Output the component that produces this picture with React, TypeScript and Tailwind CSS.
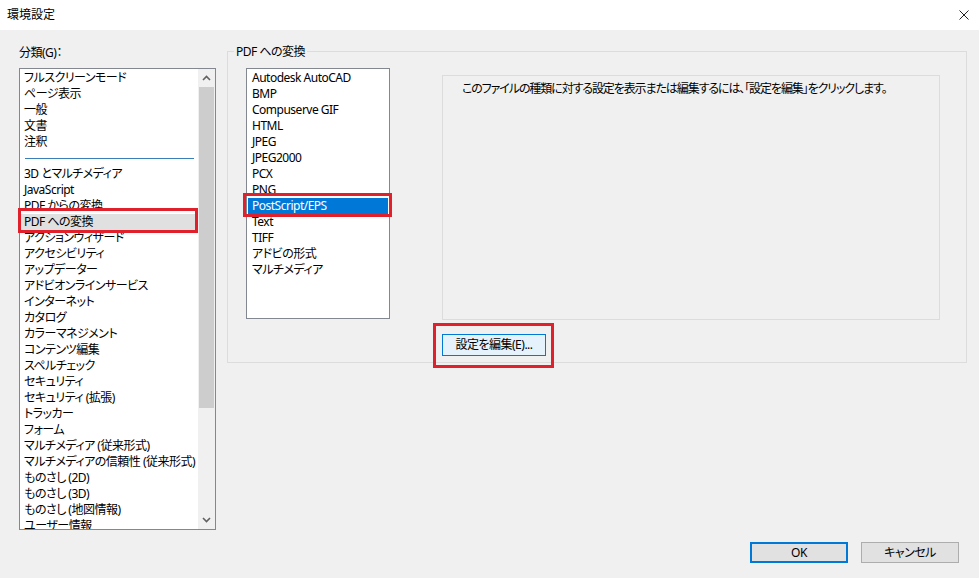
import React from 'react';

const FONT = "font-['Noto_Sans','Noto_Sans_CJK_JP',sans-serif] [font-feature-settings:'palt']";

const CATEGORIES: (string | null)[] = [
  'フルスクリーンモード',
  'ページ表示',
  '一般',
  '文書',
  '注釈',
  null,
  '3D とマルチメディア',
  'JavaScript',
  'PDF からの変換',
  'PDF への変換',
  'アクションウィザード',
  'アクセシビリティ',
  'アップデーター',
  'アドビオンラインサービス',
  'インターネット',
  'カタログ',
  'カラーマネジメント',
  'コンテンツ編集',
  'スペルチェック',
  'セキュリティ',
  'セキュリティ (拡張)',
  'トラッカー',
  'フォーム',
  'マルチメディア (従来形式)',
  'マルチメディアの信頼性 (従来形式)',
  'ものさし (2D)',
  'ものさし (3D)',
  'ものさし (地図情報)',
  'ユーザー情報',
];

const FORMATS = [
  'Autodesk AutoCAD',
  'BMP',
  'Compuserve GIF',
  'HTML',
  'JPEG',
  'JPEG2000',
  'PCX',
  'PNG',
  'PostScript/EPS',
  'Text',
  'TIFF',
  'アドビの形式',
  'マルチメディア',
];

function Chevron({ up }: { up?: boolean }) {
  return (
    <svg width="9" height="6" viewBox="0 0 9 6" className={up ? '' : 'rotate-180'}>
      <path d="M1 5 L4.5 1.5 L8 5" fill="none" stroke="#606060" strokeWidth="1.6" />
    </svg>
  );
}

export default function App() {
  return (
    <div className={`w-[979px] h-[578px] bg-[#f0f0f0] text-[12px] leading-[16px] tracking-[-0.5px] text-black overflow-hidden ${FONT}`}>
      {/* Title bar */}
      <div className="h-[30px] bg-white flex items-center justify-between pl-[7px] pr-[10px]">
        <span className="text-[12px] tracking-normal">環境設定</span>
        <svg width="10" height="10" viewBox="0 0 10 10">
          <path d="M0.5 0.5 L9.5 9.5 M9.5 0.5 L0.5 9.5" stroke="#222" strokeWidth="1" />
        </svg>
      </div>

      <div className="flex pl-[19px] pt-[15px] h-[500px]">
        {/* Category column */}
        <div className="w-[197px] flex flex-col">
          <div className="h-[16px]">分類(G)：</div>
          <div className="relative mt-[7px] h-[462px] border border-[#828790] bg-white flex">
            <div className="flex-1 overflow-hidden pt-[1px]">
              {CATEGORIES.map((c, i) =>
                c === null ? (
                  <div key={i} className="h-[16px] flex items-center pl-[5px] pr-[4px]">
                    <div className="h-px w-full bg-[#3b7fb8]" />
                  </div>
                ) : (
                  <div
                    key={i}
                    className={`h-[16px] pl-[4px] whitespace-nowrap ${c === 'PDF への変換' ? 'bg-[#e0e0e0]' : ''}`}
                  >
                    {c}
                  </div>
                )
              )}
            </div>
            <div className="w-[17px] bg-[#f0f0f0] flex flex-col">
              <div className="h-[18px] flex items-center justify-center">
                <Chevron up />
              </div>
              <div className="flex-1 px-[1px]">
                <div className="h-[321px] bg-[#cdcdcd]" />
              </div>
              <div className="h-[18px] flex items-center justify-center">
                <Chevron />
              </div>
            </div>
            <div className="absolute left-[-2px] top-[139px] w-[180px] h-[25px] border-[3px] border-[#e0202a]" />
          </div>
        </div>

        {/* Conversion group */}
        <div className="ml-[11px] mt-[6px]">
          <div className="relative w-[740px] h-[312px] border border-[#dcdcdc] pl-[18px] pt-[16px] flex">
            <div className="absolute -top-[8px] left-[6px] bg-[#f0f0f0] px-[2px]">PDF への変換</div>

            <div className="relative w-[144px] h-[251px] border border-[#828790] bg-white pt-[1px]">
              {FORMATS.map((f) => (
                <div
                  key={f}
                  className={`h-[16px] whitespace-nowrap ${
                    f === 'PostScript/EPS' ? 'mx-[1px] pl-[4px] bg-[#0078d7] text-white' : 'pl-[5px]'
                  }`}
                >
                  {f}
                </div>
              ))}
              <div className="absolute left-[-4px] top-[124px] w-[149px] h-[24px] border-[3px] border-[#e0202a]" />
            </div>

            <div className="ml-[52px] mt-[7px] flex flex-col">
              <div className="w-[498px] h-[245px] border border-[#dcdcdc] pl-[19px] pt-[5px] whitespace-nowrap tracking-[-1.1px]">
                このファイルの種類に対する設定を表示または編集するには、「設定を編集」をクリックします。
              </div>
              <div className="relative mt-[14px] w-fit">
                <button className="w-[104px] h-[22px] border border-[#0078d7] bg-[#e5f1fb] text-[12px] leading-[16px]">
                  設定を編集(E)...
                </button>
                <div className="absolute left-[-9px] top-[-11px] w-[121px] h-[45px] border-[3px] border-[#e0202a]" />
              </div>
            </div>
          </div>
        </div>
      </div>

      {/* Dialog buttons */}
      <div className="flex justify-end gap-[13px] pr-[20px] mt-[12px]">
        <button className="w-[98px] h-[21px] border-2 border-[#0078d7] bg-[#e1e1e1] text-[12px] leading-[16px]">OK</button>
        <button className="w-[98px] h-[21px] border border-[#adadad] bg-[#e1e1e1] text-[12px] leading-[16px]">キャンセル</button>
      </div>
    </div>
  );
}
